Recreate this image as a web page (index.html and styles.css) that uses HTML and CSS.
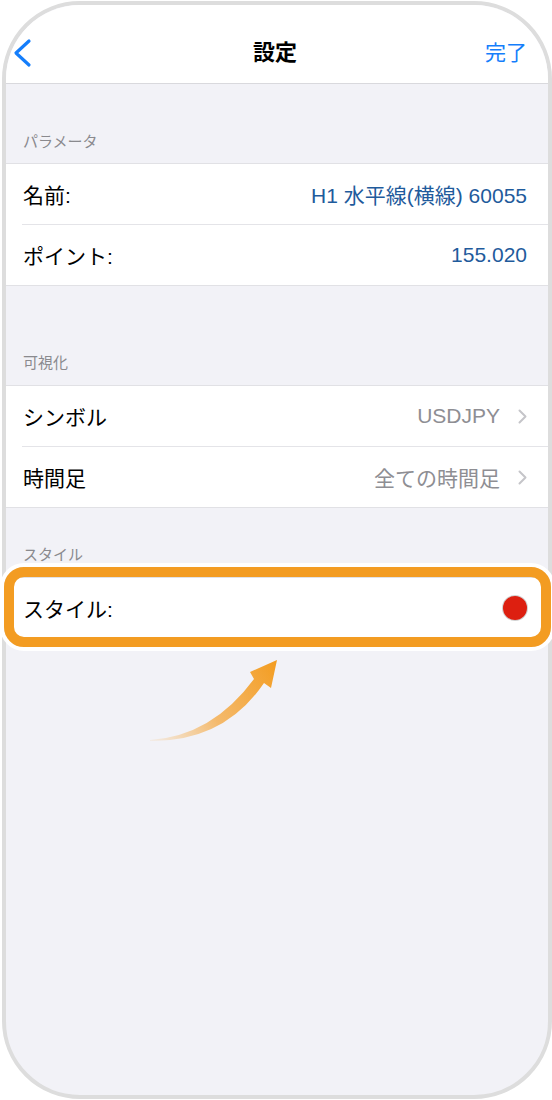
FILE: index.html
```html
<!DOCTYPE html>
<html lang="ja">

<head>
  <meta charset="UTF-8" />
  <meta name="viewport" content="width=device-width, initial-scale=1.0" />
  <title>設定</title>
  <link rel="stylesheet" href="styles.css">
</head>

<body>
  <div class="phone">
    <div class="nav-bar">
      <span class="nav-back" aria-label="戻る">
        <svg width="20" height="30" viewBox="0 0 20 30">
          <polyline points="16,3 3,15 16,27" fill="none" stroke="#157efb" stroke-width="3.2" stroke-linecap="round" stroke-linejoin="round" />
        </svg>
      </span>
      <span class="nav-title">設定</span>
      <span class="nav-done">完了</span>
    </div>

    <div class="section-header first">パラメータ</div>
    <div class="group">
      <div class="row">
        <span class="label">名前:</span>
        <span class="value blue">H1 水平線(横線) 60055</span>
      </div>
      <div class="row">
        <span class="label">ポイント:</span>
        <span class="value blue">155.020</span>
      </div>
    </div>

    <div class="section-header second">可視化</div>
    <div class="group">
      <div class="row">
        <span class="label">シンボル</span>
        <span class="value grey">USDJPY</span>
        <svg class="chevron" width="9" height="15" viewBox="0 0 9 15">
          <polyline points="1.5,1.5 7.5,7.5 1.5,13.5" fill="none" stroke="#c5c5c9" stroke-width="2" stroke-linecap="round" stroke-linejoin="round" />
        </svg>
      </div>
      <div class="row">
        <span class="label">時間足</span>
        <span class="value grey">全ての時間足</span>
        <svg class="chevron" width="9" height="15" viewBox="0 0 9 15">
          <polyline points="1.5,1.5 7.5,7.5 1.5,13.5" fill="none" stroke="#c5c5c9" stroke-width="2" stroke-linecap="round" stroke-linejoin="round" />
        </svg>
      </div>
    </div>

    <div class="section-header third">スタイル</div>
    <div class="group">
      <div class="row highlighted">
        <span class="label">スタイル:</span>
        <span class="color-dot"></span>
        <span class="callout"></span>
      </div>
    </div>

    <svg class="arrow" width="150" height="100" viewBox="0 0 150 100">
      <defs>
        <linearGradient id="arrowFill" gradientUnits="userSpaceOnUse" x1="10" y1="90" x2="137" y2="10">
          <stop offset="0" stop-color="#f7b04d" stop-opacity="0.1" />
          <stop offset="0.45" stop-color="#f5a63c" stop-opacity="0.75" />
          <stop offset="1" stop-color="#f39c1f" />
        </linearGradient>
      </defs>
      <path d="M10,90 Q72,86 114,29 L110,22 L137,10 L131,38 L124,33 Q84,92 10,91 Z" fill="url(#arrowFill)" />
    </svg>
  </div>
</body>

</html>
```

FILE: styles.css
```css
body {
  margin: 0;
  background: #fff;
  font-family: "Liberation Sans", "Noto Sans CJK JP", sans-serif;
}

.phone {
  position: relative;
  box-sizing: border-box;
  width: 550px;
  height: 1098px;
  margin: 1px 0 0 2px;
  border: 4px solid #dddddd;
  border-radius: 78px;
  background: #f2f2f7;
}

.nav-bar {
  box-sizing: border-box;
  height: 79px;
  padding: 30px 21px 0 7px;
  display: flex;
  align-items: flex-start;
  background: #fff;
  border-bottom: 1px solid #d9d9dd;
  border-radius: 74px 74px 0 0;
}

.nav-back,
.nav-done,
.nav-title {
  height: 36px;
  line-height: 36px;
  display: flex;
  align-items: center;
}

.nav-back {
  width: 60px;
}

.nav-title {
  flex: 1;
  justify-content: center;
  font-size: 22px;
  font-weight: bold;
  color: #000;
  padding-left: 10px;
}

.nav-done {
  width: 60px;
  justify-content: flex-end;
  font-size: 21px;
  color: #157efb;
}

.section-header {
  box-sizing: border-box;
  display: flex;
  align-items: flex-end;
  padding: 0 0 11px 17px;
  font-size: 15px;
  line-height: 20px;
  color: #8a8a8e;
}

.section-header.first {
  height: 79px;
}

.section-header.second {
  height: 99px;
  padding-bottom: 12px;
}

.section-header.third {
  height: 69px;
  padding-bottom: 12px;
}

.group {
  background: #fff;
  border-top: 1px solid #e1e1e5;
  border-bottom: 1px solid #e1e1e5;
}

.row {
  position: relative;
  height: 60px;
  display: flex;
  align-items: center;
  padding: 0 21px 0 17px;
  font-size: 21px;
}

.row + .row {
  border-top: 1px solid #e4e4e8;
  margin-left: 16px;
  padding-left: 1px;
}

.label {
  flex: 1;
  color: #000;
}

.value.blue {
  color: #1f5b9c;
}

.value.grey {
  color: #8e8e93;
}

.chevron {
  margin-left: 18px;
}

.color-dot {
  width: 24px;
  height: 24px;
  border-radius: 50%;
  background: #dd1f10;
  box-shadow: 0 0 0 1px rgba(120, 120, 120, 0.35);
}

.callout {
  position: absolute;
  left: -2px;
  right: -3px;
  top: -11px;
  bottom: -9px;
  border: 10px solid #f39c22;
  border-radius: 20px;
  box-shadow: 0 0 0 4px #fff;
}

.arrow {
  position: absolute;
  left: 134px;
  top: 645px;
}
```
